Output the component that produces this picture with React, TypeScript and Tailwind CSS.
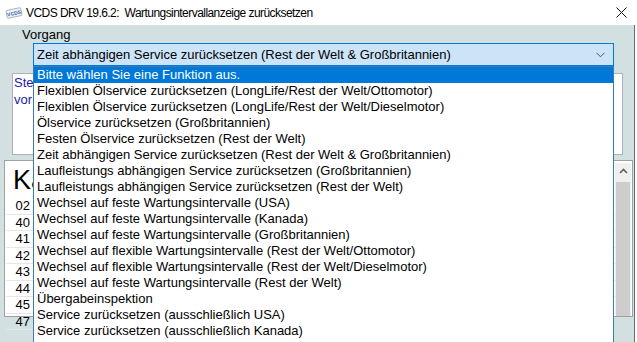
import React from 'react';

const functions = [
  'Bitte wählen Sie eine Funktion aus.',
  'Flexiblen Ölservice zurücksetzen (LongLife/Rest der Welt/Ottomotor)',
  'Flexiblen Ölservice zurücksetzen (LongLife/Rest der Welt/Dieselmotor)',
  'Ölservice zurücksetzen (Großbritannien)',
  'Festen Ölservice zurücksetzen (Rest der Welt)',
  'Zeit abhängigen Service zurücksetzen (Rest der Welt & Großbritannien)',
  'Laufleistungs abhängigen Service zurücksetzen (Großbritannien)',
  'Laufleistungs abhängigen Service zurücksetzen (Rest der Welt)',
  'Wechsel auf feste Wartungsintervalle (USA)',
  'Wechsel auf feste Wartungsintervalle (Kanada)',
  'Wechsel auf feste Wartungsintervalle (Großbritannien)',
  'Wechsel auf flexible Wartungsintervalle (Rest der Welt/Ottomotor)',
  'Wechsel auf flexible Wartungsintervalle (Rest der Welt/Dieselmotor)',
  'Wechsel auf feste Wartungsintervalle (Rest der Welt)',
  'Übergabeinspektion',
  'Service zurücksetzen (ausschließlich USA)',
  'Service zurücksetzen (ausschließlich Kanada)',
];

const channels = ['02', '40', '41', '42', '43', '44', '45', '47'];

const VcdsIcon = () => (
  <svg width="18" height="14" viewBox="0 0 18 14">
    <g transform="rotate(-12 9 7)">
      <rect x="1.5" y="3" width="15" height="8" rx="1" fill="#eef2f7" stroke="#9aa8ba" strokeWidth="0.8" />
      <text x="9" y="9" fontSize="5" fontWeight="bold" textAnchor="middle" fill="#3a5f9f" fontFamily="Liberation Sans, sans-serif">
        VCDS
      </text>
    </g>
  </svg>
);

const App = () => {
  return (
    <div className="w-[637px] h-[342px] overflow-hidden bg-white font-['Liberation_Sans',Arial,sans-serif] text-black">
      {/* title bar */}
      <div className="h-[25px] flex items-center bg-white">
        <div className="w-[26px] flex justify-center pl-[2px]">
          <VcdsIcon />
        </div>
        <span className="text-[12px] tracking-[-0.55px]">VCDS DRV 19.6.2:&nbsp; Wartungsintervallanzeige zurücksetzen</span>
        <svg className="ml-auto mr-[10px]" width="11" height="11" viewBox="0 0 11 11">
          <path d="M0.5 0.5 L10.5 10.5 M10.5 0.5 L0.5 10.5" stroke="#111" strokeWidth="1" />
        </svg>
      </div>

      <div className="relative h-[317px] w-[635px] bg-[#d3e0e1] border-r border-[#6a6a6a]">
        <div className="pl-[22px] pt-[2px] h-[18px] text-[13px] leading-[15px]">Vorgang</div>

        {/* combobox */}
        <div className="ml-[33px] w-[581px] h-[23px] bg-[#cce4f7] border border-[#0078d7] flex items-center pl-[3px] pr-[8px] text-[13px]">
          <span>Zeit abhängigen Service zurücksetzen (Rest der Welt &amp; Großbritannien)</span>
          <svg className="ml-auto" width="9" height="6" viewBox="0 0 9 6">
            <path d="M0.5 0.8 L4.5 4.8 L8.5 0.8" fill="none" stroke="#555" strokeWidth="1" />
          </svg>
        </div>

        {/* description box, mostly covered by the open list */}
        <div className="ml-[12px] mt-[7px] w-[611px] h-[82px] bg-white border border-[#a9b4b8] px-[1px] text-[13px] leading-[17px] text-[#1c1ca8]">
          <div>Ste</div>
          <div>vor</div>
        </div>

        {/* channel table */}
        <div className="ml-[4px] mt-[5px] w-[629px] h-[157px] bg-white border border-[#a0a0a0] flex">
          <div className="flex-1 pl-[1px]">
            <div className="h-[37px] pl-[7px] pt-[4px] text-[27px] leading-[30px]">Ka</div>
            {channels.map((c) => (
              <div key={c} className="h-[16.5px] border-b border-[#e6e6e6] flex items-center text-[13px]">
                <span className="w-[24px] text-right">{c}</span>
              </div>
            ))}
          </div>
          <div className="w-[16px] mr-[1px] mt-[2px] bg-[#f0f0f0] flex flex-col">
            <div className="h-[17px] flex items-center justify-center">
              <svg width="9" height="6" viewBox="0 0 9 6">
                <path d="M1 5 L4.5 1.5 L8 5" fill="none" stroke="#606060" strokeWidth="1.6" />
              </svg>
            </div>
            <div className="mx-[1px] mt-[2px] h-[138px] bg-[#cdcdcd]" />
          </div>
        </div>

        {/* open dropdown list */}
        <div className="absolute left-[33px] top-[41px] w-[581px] h-[277px] bg-white border border-[#3d7ab0] text-[13px]">
          {functions.map((f, i) => (
            <div
              key={f}
              className={
                i === 0
                  ? 'h-[16px] leading-[16px] pl-[3px] bg-[#0078d7] text-white'
                  : 'h-[16px] leading-[16px] pl-[3px]'
              }
            >
              {f}
            </div>
          ))}
        </div>
      </div>
    </div>
  );
};

export default App;
